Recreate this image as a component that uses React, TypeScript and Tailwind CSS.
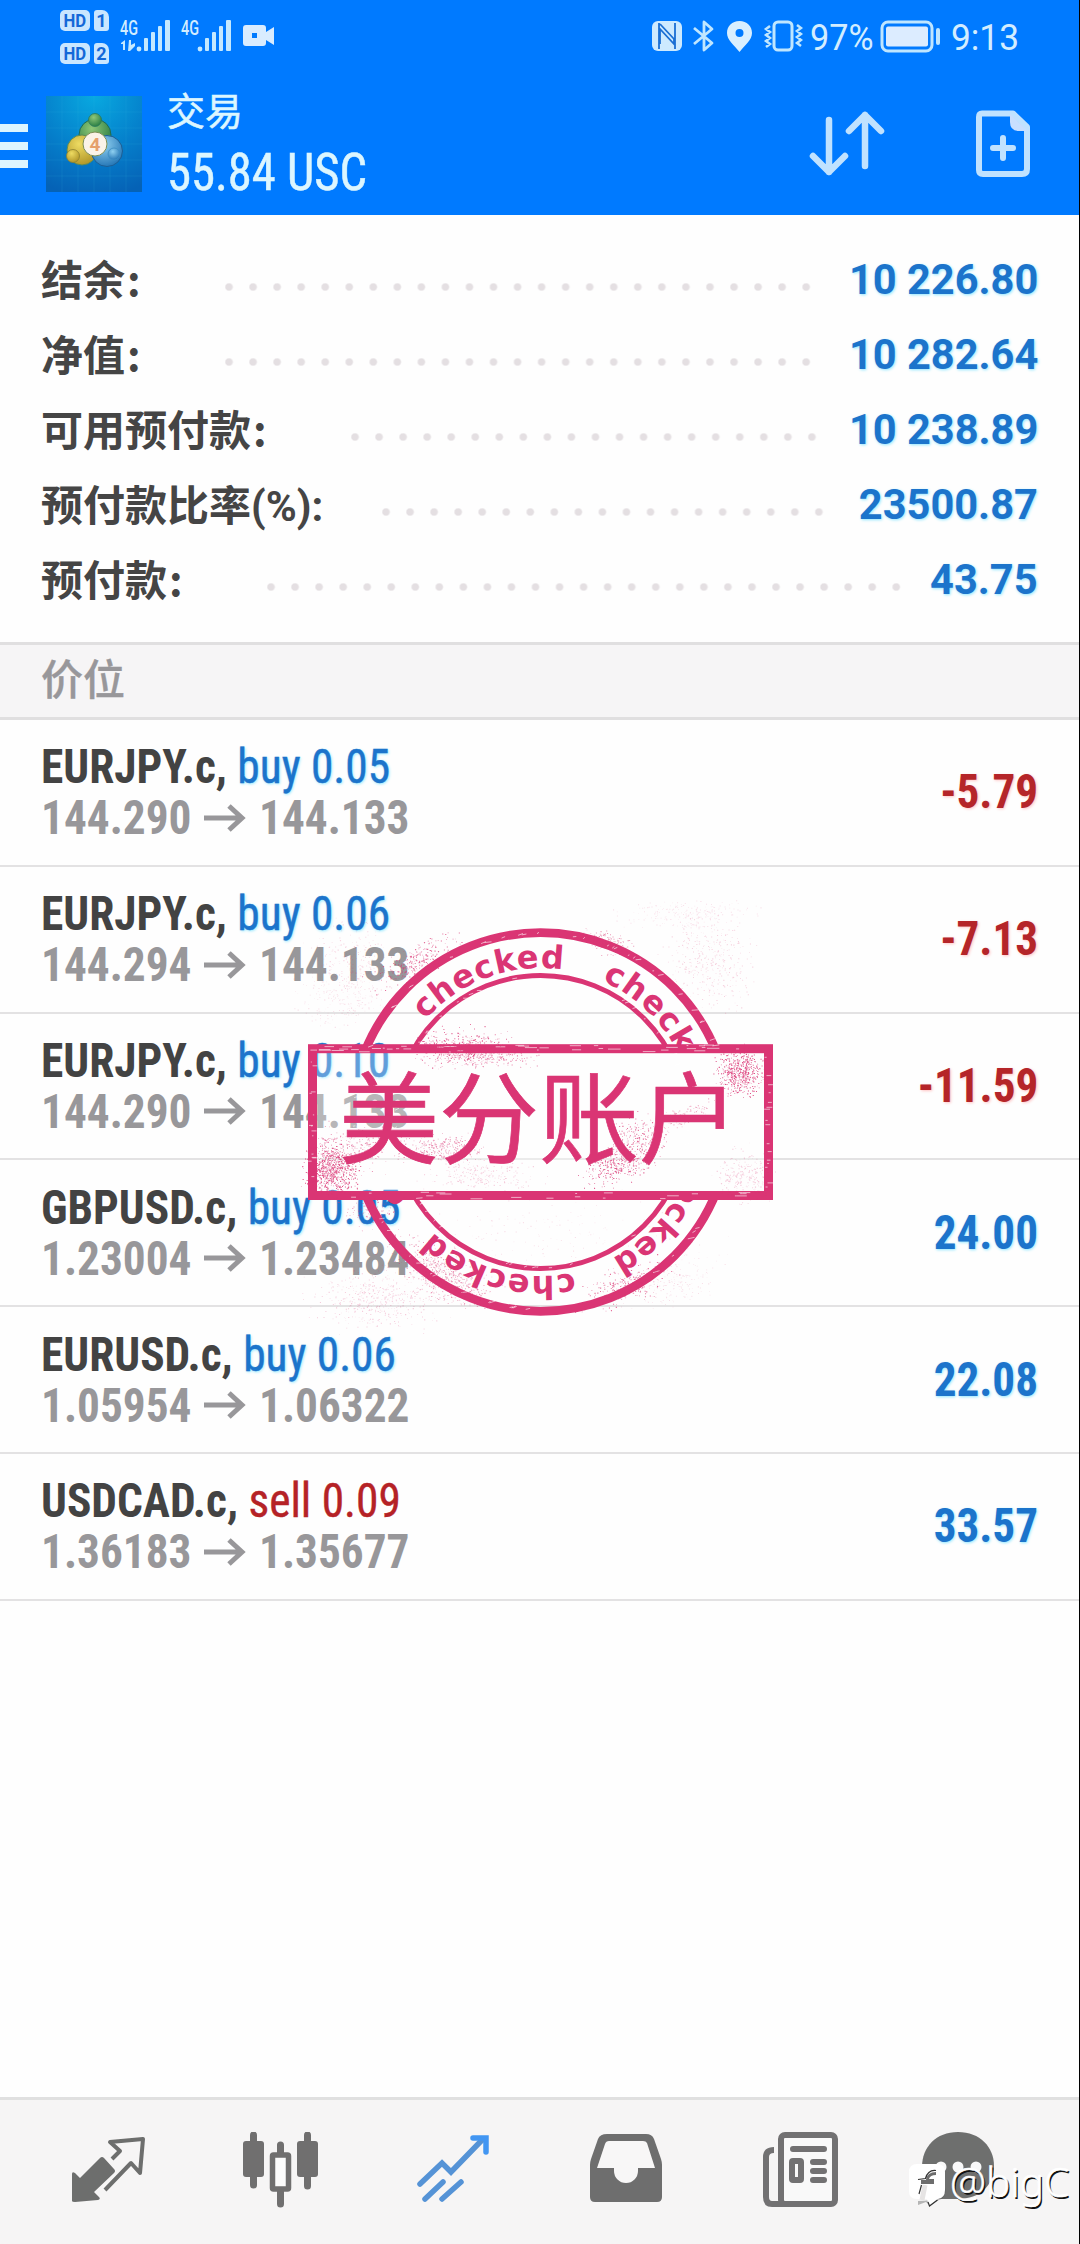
import React from 'react';

type Position = {
  symbol: string;
  side: 'buy' | 'sell';
  volume: string;
  open: string;
  current: string;
  profit: string;
};

const balances = [
  { label: '结余', suffix: ':', value: '10 226.80', labelWidth: 'w-[184px]', dots: 25 },
  { label: '净值', suffix: ':', value: '10 282.64', labelWidth: 'w-[184px]', dots: 25 },
  { label: '可用预付款', suffix: ':', value: '10 238.89', labelWidth: 'w-[310px]', dots: 20 },
  { label: '预付款比率(%):', suffix: '', value: '23500.87', labelWidth: 'w-[341px]', dots: 19 },
  { label: '预付款', suffix: ':', value: '43.75', labelWidth: 'w-[226px]', dots: 27 },
];

const positions: Position[] = [
  { symbol: 'EURJPY.c', side: 'buy', volume: '0.05', open: '144.290', current: '144.133', profit: '-5.79' },
  { symbol: 'EURJPY.c', side: 'buy', volume: '0.06', open: '144.294', current: '144.133', profit: '-7.13' },
  { symbol: 'EURJPY.c', side: 'buy', volume: '0.10', open: '144.290', current: '144.133', profit: '-11.59' },
  { symbol: 'GBPUSD.c', side: 'buy', volume: '0.05', open: '1.23004', current: '1.23484', profit: '24.00' },
  { symbol: 'EURUSD.c', side: 'buy', volume: '0.06', open: '1.05954', current: '1.06322', profit: '22.08' },
  { symbol: 'USDCAD.c', side: 'sell', volume: '0.09', open: '1.36183', current: '1.35677', profit: '33.57' },
];

const DOT_STEP = 24.06;

function SimBadge({ n }: { n: number }) {
  return (
    <div className="flex h-[21px] gap-1 text-[#1468d8]">
      <span className="flex w-[30px] items-center justify-center rounded-[5px] bg-[#c9e6ff] text-[19px] leading-none font-bold">
        <span className="scale-x-[.88]">HD</span>
      </span>
      <span className="flex w-[15px] items-center justify-center rounded-[3px] rounded-tr-[7px] bg-[#c9e6ff] text-[18px] leading-none font-bold">
        {n}
      </span>
    </div>
  );
}

function Signal({ data }: { data?: boolean }) {
  return (
    <div className="relative h-8 w-[52px]">
      <span className="absolute top-0 left-0 origin-left scale-x-[.72] text-[20px] leading-[16px] font-medium">4G</span>
      <svg className="absolute inset-0" width="52" height="32" viewBox="0 0 52 32" fill="#c4e9ff">
        {data && <path d="M1 23l4-3v10H3v-6H1zM9 20h2v5l4-2v3l-5 5H8z" />}
        <circle cx="19" cy="29" r="2.4" />
        <rect x="24" y="18" width="4" height="13" rx="1" />
        <rect x="31" y="12" width="4" height="19" rx="1" />
        <rect x="38" y="6" width="4" height="25" rx="1" />
        <rect x="45" y="0" width="5" height="31" rx="1" />
      </svg>
    </div>
  );
}

function StatusBar() {
  return (
    <div className="flex h-[76px] items-start pl-[60px] text-[#d3edff]">
      <div className="flex flex-col gap-3 pt-[10px]">
        <SimBadge n={1} />
        <SimBadge n={2} />
      </div>
      <div className="mt-5 ml-[11px] flex gap-[9px]">
        <Signal data />
        <Signal />
      </div>
      <svg className="mt-6 ml-[9px]" width="34" height="24" viewBox="0 0 34 24" fill="#d9ecff">
        <path fillRule="evenodd" d="M4 1h17q3 0 3 3v4l8-5v18l-8-5v3q0 3-3 3H4q-3 0-3-3V4q0-3 3-3zm6 8v5h5V9z" />
      </svg>

      <div className="mt-5 mr-[62px] ml-auto flex">
        <svg width="32" height="32" viewBox="0 0 32 32">
          <rect x="1" y="1" width="30" height="30" rx="6" fill="#cdeaff" />
          <path d="M8 3v26M9 4l14 15v5L9 9v15M24 29V3" fill="none" stroke="#1a6fd4" strokeWidth="1.8" />
        </svg>
        <svg className="ml-[9px]" width="24" height="32" viewBox="0 0 24 32" fill="none" stroke="#bfe6ff" strokeWidth="2.8">
          <path d="M2 8l18 15-8 7V2l8 7L2 24" strokeLinejoin="round" />
        </svg>
        <svg className="ml-[10px]" width="27" height="32" viewBox="0 0 27 32" fill="#d9efff">
          <path fillRule="evenodd" d="M13.500 1C6 1 1 6 1 13c0 7 7 12 12.500 19C19 25 26 20 26 13 26 6 21 1 13.500 1zm0 8a4 4 0 1 1 0 8 4 4 0 0 1 0-8z" />
        </svg>
        <svg className="ml-[10px]" width="40" height="32" viewBox="0 0 40 32" fill="none" stroke="#bfe6ff" strokeWidth="3">
          <rect x="11" y="2" width="18" height="28" rx="4" />
          <path d="M7 6L3 9l4 3-4 3 4 3-4 3 4 3-4 3M34 5l4 3-4 3 4 3-4 3 4 3-4 3 4 3" strokeWidth="2.500" />
        </svg>
        <span className="ml-[7px] w-[64px] text-[36px] leading-[36px]">
          <span className="inline-block origin-left scale-x-[.95]">97%</span>
        </span>
        <svg className="ml-[6px]" width="62" height="33" viewBox="0 0 62 33">
          <rect x="2" y="2" width="50" height="29" rx="6" fill="none" stroke="#bfe6ff" strokeWidth="3" />
          <rect x="6" y="6.500" width="42" height="20" rx="2" fill="#dcecff" />
          <rect x="56" y="8" width="4" height="17" rx="2" fill="#bfe6ff" />
        </svg>
        <span className="ml-[9px] w-[66px] text-[36px] leading-[36px]">
          <span className="inline-block origin-left scale-x-[.98]">9:13</span>
        </span>
      </div>
    </div>
  );
}

function AppLogo() {
  return (
    <svg className="mt-5 ml-[18px]" width="96" height="96" viewBox="0 0 96 96">
      <defs>
        <radialGradient id="logoBg" cx=".5" cy="0" r="1.050">
          <stop offset="0" stopColor="#08a9e0" />
          <stop offset=".55" stopColor="#057fcb" />
          <stop offset="1" stopColor="#0562b6" />
        </radialGradient>
        <radialGradient id="logoGreen" cx=".4" cy=".3" r=".7">
          <stop offset="0" stopColor="#8fc777" />
          <stop offset="1" stopColor="#2b7f45" />
        </radialGradient>
        <radialGradient id="logoGold" cx=".4" cy=".3" r=".7">
          <stop offset="0" stopColor="#eddb62" />
          <stop offset="1" stopColor="#b3982a" />
        </radialGradient>
        <radialGradient id="logoBlue" cx=".4" cy=".3" r=".7">
          <stop offset="0" stopColor="#8fd0f0" />
          <stop offset="1" stopColor="#2879b8" />
        </radialGradient>
      </defs>
      <rect width="96" height="96" fill="url(#logoBg)" />
      <path d="M0 16h96M0 32h96M0 48h96M0 64h96M0 80h96M16 0v96M32 0v96M48 0v96M64 0v96M80 0v96" stroke="#3cc0e8" strokeOpacity=".14" />
      <circle cx="49" cy="39" r="16" fill="url(#logoGreen)" stroke="#1f6b55" />
      <circle cx="36" cy="54" r="15" fill="url(#logoGold)" stroke="#5d8a55" />
      <circle cx="61" cy="55" r="15.500" fill="url(#logoBlue)" stroke="#1c5f95" />
      <circle cx="49" cy="24" r="6.500" fill="url(#logoGreen)" stroke="#2a7a5c" strokeWidth=".8" />
      <circle cx="27" cy="60" r="6.500" fill="url(#logoGold)" stroke="#8c8030" strokeWidth=".8" />
      <circle cx="68" cy="58" r="6" fill="url(#logoBlue)" stroke="#3d8fc4" strokeWidth=".8" />
      <circle cx="49" cy="48" r="12" fill="#fbf3e8" stroke="#7d8f55" />
      <text x="49" y="55" textAnchor="middle" fontFamily="Roboto, sans-serif" fontSize="19" fontWeight="700" fill="#e5a06c">
        4
      </text>
    </svg>
  );
}

function Header() {
  return (
    <header className="h-[215px] bg-[#007aff]">
      <StatusBar />
      <div className="flex">
        <div className="mt-12 flex w-7 flex-col gap-[10px]">
          <span className="h-2 bg-[#dcf5ff]" />
          <span className="h-2 bg-[#dcf5ff]" />
          <span className="h-2 bg-[#dcf5ff]" />
        </div>
        <AppLogo />
        <div className="ml-[25px] text-[#dcf6ff]">
          <div className="mt-[12px] font-['Noto_Sans_CJK_SC'] text-[38px] leading-[42px] [-webkit-text-stroke:0.5px_#dcf6ff]">交易</div>
          <div className="mt-[11px] w-[220px] origin-left scale-x-[.935] font-['Roboto_Condensed'] text-[52px] leading-[64px] whitespace-nowrap [-webkit-text-stroke:0.5px_#dcf6ff]">
            55.84 USC
          </div>
        </div>
        <svg className="mt-[33px] ml-auto" width="76" height="68" viewBox="0 0 76 68" fill="none" stroke="#c0e2ff" strokeWidth="6.500" strokeLinecap="round" strokeLinejoin="round">
          <path d="M20 11v52M4 47l16 16 16-16M56 57V6M40 22L56 6l16 16" />
        </svg>
        <svg className="mt-[33px] mr-[48px] ml-[90px]" width="56" height="70" viewBox="0 0 56 70" fill="none" stroke="#c0e2ff">
          <path d="M7 4.500h31L52 18v42q0 5-5 5H8q-4 0-4-4V8q0-3.500 3-3.500z" strokeWidth="6" strokeLinejoin="round" />
          <path d="M35 5l18 17h-9q-9 0-9-9z" fill="#c9dfff" stroke="none" />
          <path d="M28 29v20M18 39h20" strokeWidth="6" strokeLinecap="round" />
        </svg>
      </div>
    </header>
  );
}

function Balances() {
  return (
    <section className="h-[427px] pt-[27px] pr-[41px] pl-[41px]">
      {balances.map((b) => (
        <div key={b.label} className="flex h-[75.1px] items-center text-[42px] leading-none font-bold whitespace-nowrap">
          <span className={`${b.labelWidth} mt-px shrink-0 text-[#454545]`}>
            {b.label}
            <span className="ml-[2px] font-['Noto_Sans_CJK_SC']">{b.suffix}</span>
          </span>
          <span
            className="mt-[15px] h-2 shrink-0 bg-[radial-gradient(circle_at_4px_4px,#e4dfe2_3px,transparent_4.5px)] bg-[length:24.06px_8px]"
            style={{ width: b.dots * DOT_STEP - 12 }}
          />
          <span className="ml-auto origin-right scale-x-[.99] text-[#1c74cb] [text-shadow:1px_1px_3px_#8fe6ff]">{b.value}</span>
        </div>
      ))}
    </section>
  );
}

function PositionRow({ p }: { p: Position }) {
  const loss = p.profit.startsWith('-');
  return (
    <div className="flex h-[146.8px] items-center justify-between border-b-[2.5px] border-[#e3e2e3] pr-[41px] pl-[41px] font-['Roboto_Condensed'] text-[48px] whitespace-nowrap">
      <div className="leading-[51px]">
        <div className="h-[51px] origin-left scale-x-[.945] font-bold text-[#434343]">
          {p.symbol},{' '}
          {p.side === 'buy' ? (
            <span className="font-normal text-[#1c74cb] [-webkit-text-stroke:0.4px_#1c74cb] [text-shadow:1px_1px_3px_#8fe6ff]">buy {p.volume}</span>
          ) : (
            <span className="font-normal text-[#b52226] [-webkit-text-stroke:0.4px_#b52226]">sell {p.volume}</span>
          )}
        </div>
        <div className="flex h-[51px] items-center font-bold text-[#98979a]">
          <span className="w-[162px]">
            <span className="inline-block origin-left scale-x-[.943]">{p.open}</span>
          </span>
          <svg width="44" height="30" viewBox="0 0 44 30" fill="none" stroke="#98979a" strokeWidth="5">
            <path d="M1 15h38M26 3l13 12-13 12" />
          </svg>
          <span className="ml-[12px] inline-block origin-left scale-x-[.943]">{p.current}</span>
        </div>
      </div>
      {loss ? (
        <span className="origin-right scale-x-[.94] font-bold text-[#b52529] [text-shadow:1px_1px_3px_#ffc4c4]">{p.profit}</span>
      ) : (
        <span className="origin-right scale-x-[.94] font-bold text-[#1c74cb] [text-shadow:1px_1px_3px_#8fe6ff]">{p.profit}</span>
      )}
    </div>
  );
}

// Small deterministic generator so the ink spatter is the same on every render
function makeRandom(seed: number) {
  let s = seed;
  return () => {
    s = (s * 1664525 + 1013904223) % 4294967296;
    return s / 4294967296;
  };
}

// x, y, spread x, spread y, count, rotation, opacity
const spatter = [
  [170, 146, 24, 9, 380, 0, 0.75],
  [190, 156, 28, 6, 300, 0, 0.6],
  [450, 172, 12, 12, 520, 0, 0.85],
  [42, 270, 14, 14, 750, 0, 0.85],
  [70, 245, 24, 12, 200, 0, 0.5],
  [150, 248, 22, 7, 260, 0, 0.55],
  [325, 265, 16, 10, 300, -20, 0.8],
  [350, 240, 14, 14, 230, -30, 0.7],
  [395, 215, 18, 6, 120, -20, 0.4],
  [125, 62, 24, 8, 260, -30, 0.7],
  [315, 42, 14, 6, 150, 20, 0.5],
  [335, 385, 24, 10, 260, -20, 0.7],
  [150, 372, 30, 12, 400, 30, 0.5],
  [160, 385, 24, 10, 200, 20, 0.4],
  [80, 312, 14, 9, 120, 0, 0.5],
  [420, 60, 26, 22, 360, 40, 0.22],
  [400, 14, 34, 10, 240, 0, 0.14],
  [60, 60, 20, 22, 240, -20, 0.2],
  [50, 100, 22, 16, 200, 0, 0.15],
  [90, 400, 34, 16, 460, 0, 0.25],
  [455, 275, 16, 14, 240, 0, 0.25],
  [190, 275, 30, 8, 220, 0, 0.25],
  [250, 330, 70, 20, 140, 0, 0.15],
  [390, 380, 26, 14, 180, -20, 0.15],
];

function spatterPath(c: number[], seed: number) {
  const rnd = makeRandom(seed);
  const [x, y, sx, sy, n, rot] = c;
  const a = (rot * Math.PI) / 180;
  let d = '';
  for (let i = 0; i < n; i++) {
    const u = rnd() + rnd() + rnd() - 1.5;
    const v = rnd() + rnd() + rnd() - 1.5;
    const dx = u * sx * 1.7;
    const dy = v * sy * 1.7;
    const px = x + dx * Math.cos(a) - dy * Math.sin(a);
    const py = y + dx * Math.sin(a) + dy * Math.cos(a);
    const r = 0.5 + rnd() * 0.7;
    d += `M${px.toFixed(1)} ${py.toFixed(1)}h${r.toFixed(1)}v${r.toFixed(1)}h-${r.toFixed(1)}z`;
  }
  return d;
}

function scratches() {
  const rnd = makeRandom(77);
  let d = '';
  for (let i = 0; i < 60; i++) {
    const y = rnd() > 0.5 ? 145 : 292;
    d += `M${(18 + rnd() * 450).toFixed(1)} ${(y + rnd() * 7).toFixed(1)}h${(1 + rnd() * 12).toFixed(1)}`;
  }
  for (let i = 0; i < 30; i++) {
    const x = rnd() > 0.5 ? 18 : 474;
    d += `M${(x + rnd() * 5).toFixed(1)} ${(150 + rnd() * 145).toFixed(1)}h${(1 + rnd() * 5).toFixed(1)}`;
  }
  for (let i = 0; i < 110; i++) {
    const t = rnd() * Math.PI * 2;
    const r = rnd() > 0.65 ? 146 : 188;
    const x = 250.5 + r * Math.cos(t);
    const y = 222 + r * Math.sin(t);
    d += `M${x.toFixed(1)} ${y.toFixed(1)}l${(1 + rnd() * 6).toFixed(1)} ${(-rnd() * 2).toFixed(1)}`;
  }
  return d;
}

function Stamp() {
  return (
    <svg className="pointer-events-none absolute top-[900px] left-[290px]" width="500" height="440" viewBox="0 0 500 440">
      <defs>
        <clipPath id="outsidePlate">
          <path d="M0 0h500v145H0zM0 299h500v141H0z" />
        </clipPath>
        <path id="ring" d="M250.500 68a154 154 0 0 1 0 308a154 154 0 0 1 0-308" />
      </defs>
      <g clipPath="url(#outsidePlate)" fill="none" stroke="#da3574">
        <circle cx="250.500" cy="222" r="189.300" strokeWidth="8.700" />
        <circle cx="250.500" cy="222" r="146.500" strokeWidth="5" />
        {[-48.5, 23.5, 95.5, 167.5, 239.5].map((deg) => (
          <text
            key={deg}
            transform={`rotate(${deg} 250.5 222)`}
            fontFamily="DejaVu Sans, sans-serif"
            fontSize="32"
            fontWeight="700"
            letterSpacing=".9"
            fill="#da3574"
            stroke="none"
          >
            <textPath href="#ring">checked</textPath>
          </text>
        ))}
      </g>
      <rect x="22.500" y="148.700" width="456" height="146.800" fill="#fff" fillOpacity=".3" stroke="#da3574" strokeWidth="9" />
      <path d={scratches()} stroke="#fff" strokeOpacity=".75" strokeWidth=".8" />
      {spatter.map((c, i) => (
        <path key={i} d={spatterPath(c, i * 97 + 5)} fill="#da3574" fillOpacity={c[6]} />
      ))}
      <text x="49" y="256" fontFamily="Noto Sans CJK SC, sans-serif" fontSize="100" fill="#da3574" stroke="#da3574" strokeWidth=".7">
        美分账户
      </text>
    </svg>
  );
}

function Watermark() {
  return (
    <div className="absolute top-[2158px] left-[908px] flex items-start text-white">
      <svg width="42" height="52" viewBox="0 0 42 52">
        <path d="M10 43q14 0 22-4l6-9q0 11-9 13l-7 5-4-4-8 3z" fill="#555" opacity=".4" />
        <path d="M9 6h20q8 0 8 8v18q0 8-7 9l-9 7-2-7H9q-8 0-8-8V14q0-8 8-8z" fill="#fff" />
        <path d="M17 27l-3 15" fill="none" stroke="#e6e4e4" strokeWidth="5" />
        <path d="M28 14q-9 0-10 8h-5v4h13v-5h-5q1-4 7-4z" fill="#6d6d6d" />
        <path d="M28 12.500q-8-1-10.500 8l-7.500 1M13.500 27l-2.500 9M20 44l1.500 4 8-6" fill="none" stroke="#333" strokeWidth="1.200" />
      </svg>
      <span className="mt-px font-['Noto_Sans'] text-[40.5px] leading-[46px] font-light [-webkit-text-stroke:0.5px_#fff] [text-shadow:1.5px_1.5px_0_#111]">
        @bigC
      </span>
    </div>
  );
}

function TabBar() {
  return (
    <nav className="mt-auto flex h-[147px] items-start border-t-[3px] border-[#e0e0e0] bg-[#f6f5f5] pt-[32px] pl-[70px]">
      <svg width="76" height="76" viewBox="0 0 76 76" fill="#6d6e6d">
        <path d="M2 69V42q0-3 3-1l5 5 20-20q2-2 4 0l10 11q2 2 0 4L24 60l5 5q2 2-1 3L5 70q-3 0-3-1z" />
        <path d="M42 27l8-8-10-9 33-3-3 34-9-10-26 27" fill="none" stroke="#6d6e6d" strokeWidth="4" strokeLinejoin="round" />
      </svg>
      <svg className="ml-[97px]" width="76" height="76" viewBox="0 0 76 76" fill="#706f6f">
        <rect x="0" y="9" width="21" height="36" rx="3" />
        <rect x="54" y="9" width="21" height="36" rx="3" />
        <path d="M10.500 3v50M64.500 3v51M37.500 13v10M37.500 58v14" stroke="#706f6f" strokeWidth="7" strokeLinecap="round" />
        <rect x="29.500" y="23" width="16" height="34" rx="1" fill="#fbfbfb" stroke="#706f6f" strokeWidth="5.500" />
      </svg>
      <svg className="ml-[97px]" width="76" height="76" viewBox="0 0 76 76" fill="none" stroke="#5593d6" strokeWidth="5.500" strokeLinecap="round">
        <path d="M4 52l22-21 9 9 32-33" />
        <path d="M57 6h13v14" stroke="#4296f2" />
        <path d="M9 67l18-17M26 67l19-17" />
      </svg>
      <svg className="ml-[96px]" width="76" height="76" viewBox="0 0 76 76">
        <path d="M19 2h39q6 0 8 5l7 20q1 3 1 6v32q0 5-5 5H7q-5 0-5-5V33q0-3 1-6l7-20q2-5 9-5z" fill="#6e6e6e" />
        <path d="M21 9h34q3 0 4 2l8 25H50v3a12 12 0 0 1-24 0v-3H9l8-24q1-3 4-3z" fill="#f8f7f7" />
      </svg>
      <svg className="ml-[98px]" width="78" height="76" viewBox="0 0 78 76" fill="none" stroke="#727172" strokeWidth="6">
        <rect x="19" y="3" width="54" height="69" rx="4" fill="#f9f9f9" />
        <path d="M12 18q-8 0-8 7v40q0 7 6 7h14" />
        <path d="M31 17h31M51 30h11M51 39h11M51 48h11" strokeLinecap="round" />
        <rect x="30" y="29" width="9" height="19" rx="1" />
      </svg>
      <svg className="ml-[81px]" width="76" height="76" viewBox="0 0 76 76">
        <path d="M37 0C15 0 1 15 1 35v32h36c22 0 36-14 36-33S59 0 37 0z" fill="#6e6f6e" />
        <g fill="#f8f8f8">
          <circle cx="20" cy="35" r="5.500" />
          <circle cx="37" cy="35" r="5.500" />
          <circle cx="55" cy="35" r="5.500" />
        </g>
      </svg>
    </nav>
  );
}

export default function App() {
  return (
    <div className="relative flex h-[2244px] w-[1080px] flex-col overflow-hidden border-r border-black bg-[#fefefe] font-[Roboto,'Noto_Sans_CJK_SC',sans-serif]">
      <Header />
      <Balances />
      <div className="flex h-[78px] items-center border-y-[3px] border-[#e0dfe0] bg-[#f6f5f6] pb-[9px] pl-[41px] font-['Noto_Sans_CJK_SC'] text-[42px] leading-none font-medium text-[#98979a] [-webkit-text-stroke:0.4px_#98979a]">
        价位
      </div>
      <main>
        {positions.map((p, i) => (
          <PositionRow key={i} p={p} />
        ))}
      </main>
      <TabBar />
      <Stamp />
      <Watermark />
    </div>
  );
}
